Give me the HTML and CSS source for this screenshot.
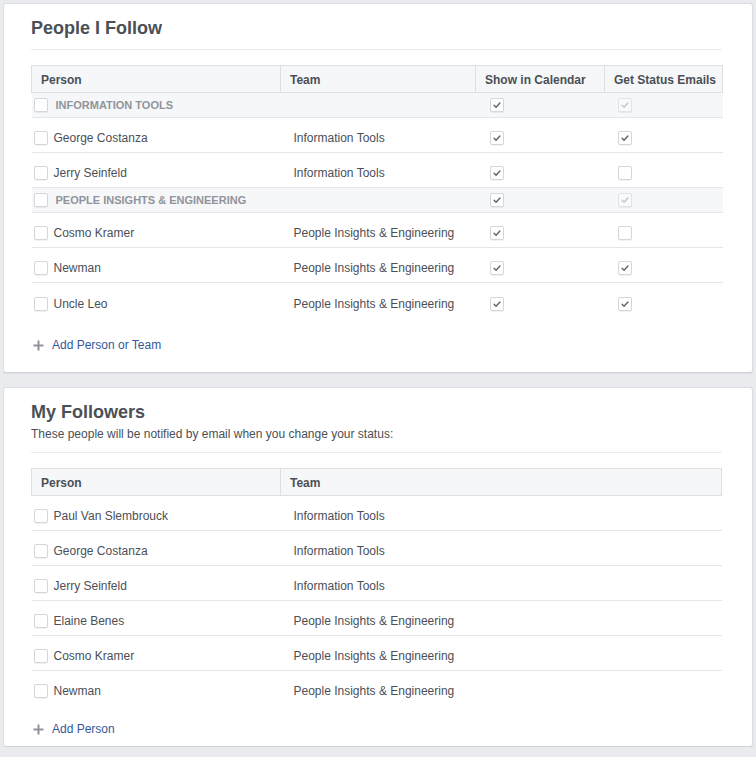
FILE: index.html
```html
<!DOCTYPE html>
<html>
<head>
<meta charset="utf-8">
<link rel="stylesheet" href="styles.css">
</head>
<body>
<svg class="defs" width="0" height="0">
  <defs>
    <symbol id="chk" viewBox="0 0 14 14"><path d="M3.6 7.4 L5.9 9.6 L10.4 4.6" fill="none" stroke="currentColor" stroke-width="1.7" stroke-linecap="round" stroke-linejoin="round"/></symbol>
  </defs>
</svg>

<section class="card card-follow">
  <header class="card-head">
    <h2 class="card-title">People I Follow</h2>
  </header>
  <table class="grid">
    <colgroup>
      <col class="c-person"><col class="c-team"><col class="c-cal"><col class="c-mail">
    </colgroup>
    <thead>
      <tr><th>Person</th><th>Team</th><th>Show in Calendar</th><th>Get Status Emails</th></tr>
    </thead>
    <tbody>
      <tr class="group">
        <td class="person"><div class="who"><span class="cb"></span><span class="group-name">INFORMATION TOOLS</span></div></td>
        <td></td>
        <td class="opt"><span class="cb"><svg><use href="#chk"/></svg></span></td>
        <td class="opt opt-last"><span class="cb dim"><svg><use href="#chk"/></svg></span></td>
      </tr>
      <tr>
        <td class="person"><div class="who"><span class="cb"></span><span class="name">George Costanza</span></div></td>
        <td class="team">Information Tools</td>
        <td class="opt"><span class="cb"><svg><use href="#chk"/></svg></span></td>
        <td class="opt opt-last"><span class="cb"><svg><use href="#chk"/></svg></span></td>
      </tr>
      <tr>
        <td class="person"><div class="who"><span class="cb"></span><span class="name">Jerry Seinfeld</span></div></td>
        <td class="team">Information Tools</td>
        <td class="opt"><span class="cb"><svg><use href="#chk"/></svg></span></td>
        <td class="opt opt-last"><span class="cb"></span></td>
      </tr>
      <tr class="group">
        <td class="person"><div class="who"><span class="cb"></span><span class="group-name">PEOPLE INSIGHTS &amp; ENGINEERING</span></div></td>
        <td></td>
        <td class="opt"><span class="cb"><svg><use href="#chk"/></svg></span></td>
        <td class="opt opt-last"><span class="cb dim"><svg><use href="#chk"/></svg></span></td>
      </tr>
      <tr>
        <td class="person"><div class="who"><span class="cb"></span><span class="name">Cosmo Kramer</span></div></td>
        <td class="team">People Insights &amp; Engineering</td>
        <td class="opt"><span class="cb"><svg><use href="#chk"/></svg></span></td>
        <td class="opt opt-last"><span class="cb"></span></td>
      </tr>
      <tr>
        <td class="person"><div class="who"><span class="cb"></span><span class="name">Newman</span></div></td>
        <td class="team">People Insights &amp; Engineering</td>
        <td class="opt"><span class="cb"><svg><use href="#chk"/></svg></span></td>
        <td class="opt opt-last"><span class="cb"><svg><use href="#chk"/></svg></span></td>
      </tr>
      <tr class="last-tall">
        <td class="person"><div class="who"><span class="cb"></span><span class="name">Uncle Leo</span></div></td>
        <td class="team">People Insights &amp; Engineering</td>
        <td class="opt"><span class="cb"><svg><use href="#chk"/></svg></span></td>
        <td class="opt opt-last"><span class="cb"><svg><use href="#chk"/></svg></span></td>
      </tr>
    </tbody>
  </table>
  <a class="add" href="#"><svg class="plus" viewBox="0 0 11 11"><path d="M5.5 0.5v10M0.5 5.5h10" stroke="currentColor" stroke-width="2"/></svg><span>Add Person or Team</span></a>
</section>

<section class="card card-followers">
  <header class="card-head">
    <h2 class="card-title">My Followers</h2>
    <p class="card-sub">These people will be notified by email when you change your status:</p>
  </header>
  <table class="grid">
    <colgroup>
      <col class="c-person"><col>
    </colgroup>
    <thead>
      <tr><th>Person</th><th>Team</th></tr>
    </thead>
    <tbody>
      <tr><td class="person"><div class="who"><span class="cb"></span><span class="name">Paul Van Slembrouck</span></div></td><td class="team">Information Tools</td></tr>
      <tr><td class="person"><div class="who"><span class="cb"></span><span class="name">George Costanza</span></div></td><td class="team">Information Tools</td></tr>
      <tr><td class="person"><div class="who"><span class="cb"></span><span class="name">Jerry Seinfeld</span></div></td><td class="team">Information Tools</td></tr>
      <tr><td class="person"><div class="who"><span class="cb"></span><span class="name">Elaine Benes</span></div></td><td class="team">People Insights &amp; Engineering</td></tr>
      <tr><td class="person"><div class="who"><span class="cb"></span><span class="name">Cosmo Kramer</span></div></td><td class="team">People Insights &amp; Engineering</td></tr>
      <tr><td class="person"><div class="who"><span class="cb"></span><span class="name">Newman</span></div></td><td class="team">People Insights &amp; Engineering</td></tr>
    </tbody>
  </table>
  <a class="add" href="#"><svg class="plus" viewBox="0 0 11 11"><path d="M5.5 0.5v10M0.5 5.5h10" stroke="currentColor" stroke-width="2"/></svg><span>Add Person</span></a>
</section>
</body>
</html>
```

FILE: styles.css
```css
* { box-sizing: border-box; }

html, body {
  margin: 0;
  background: #e9ebee;
}

body {
  padding: 3px 3px 0 3px;
  font-family: "Liberation Sans", Arial, Helvetica, sans-serif;
  font-size: 12px;
  line-height: 16px;
  color: #4b4f56;
}

.defs { position: absolute; width: 0; height: 0; overflow: hidden; }

.card {
  background: #fff;
  border: 1px solid #dadde1;
  border-bottom-color: #cfd2d7;
  border-radius: 3px;
  box-shadow: 0 1px 1px rgba(0, 0, 0, 0.06);
  padding: 14px 30px 19px 27px;
}

.card + .card { margin-top: 14px; }

.card-head {
  border-bottom: 1px solid #e9ebee;
  padding-bottom: 11px;
}

.card-followers .card-head { padding-bottom: 10px; }

.card-title {
  margin: 0;
  font-size: 18px;
  line-height: 20px;
  font-weight: bold;
  color: #4b4f56;
}

.card-sub {
  margin: 4px 0 0;
  font-size: 12px;
  line-height: 16px;
}

.grid {
  width: 100%;
  margin-top: 15px;
  border-collapse: collapse;
  table-layout: fixed;
}

.c-person { width: 249px; }
.c-team { width: 195px; }
.c-cal { width: 129px; }
.c-mail { width: 118px; }

.grid th {
  background: #f6f7f9;
  border: 1px solid #dddfe2;
  padding: 6px 9px 4px 9px;
  text-align: left;
  font-weight: bold;
  font-size: 12px;
  line-height: 16px;
  color: #4b4f56;
  white-space: nowrap;
}

.grid td {
  padding-top: 12px;
  padding-bottom: 6px;
  padding-left: 0;
  padding-right: 0;
  border-bottom: 1px solid #e5e6e9;
  vertical-align: top;
  white-space: nowrap;
}

.grid tbody tr:last-child td { border-bottom: none; }

.grid tr.last-tall td { padding-top: 13px; padding-bottom: 5px; }

.grid tr.group td {
  background: #f6f7f9;
  padding-top: 4px;
  padding-bottom: 4px;
}

.grid td.person { padding-left: 2px; }
.grid td.team { padding-left: 13px; }
.grid td.opt { padding-left: 14px; }
.grid td.opt-last { padding-left: 13px; }

.who {
  display: flex;
  align-items: center;
}

.name { margin-left: 6px; }

.group-name {
  margin-left: 8px;
  font-size: 11px;
  font-weight: bold;
  color: #90949c;
}

.cb {
  display: inline-flex;
  flex: none;
  vertical-align: top;
  margin-top: 1px;
  width: 14px;
  height: 14px;
  border: 1px solid #d3d6db;
  border-radius: 2px;
  background: #fff;
  box-shadow: 0 1px 0 rgba(0, 0, 0, 0.05);
  color: #606770;
}

.who .cb { margin-top: 0; }

.cb svg {
  width: 12px;
  height: 12px;
}

.cb.dim {
  background: #f9fafb;
  color: #c4c7cc;
  border-color: #e1e3e6;
}

.add {
  display: flex;
  align-items: center;
  margin-top: 20px;
  padding-left: 2px;
  color: #365899;
  text-decoration: none;
  font-size: 12px;
  line-height: 16px;
}

.card-followers { padding-bottom: 9px; }
.card-followers .add { margin-top: 16px; }

.plus {
  width: 11px;
  height: 11px;
  color: #90949c;
  margin-right: 8px;
}
```
